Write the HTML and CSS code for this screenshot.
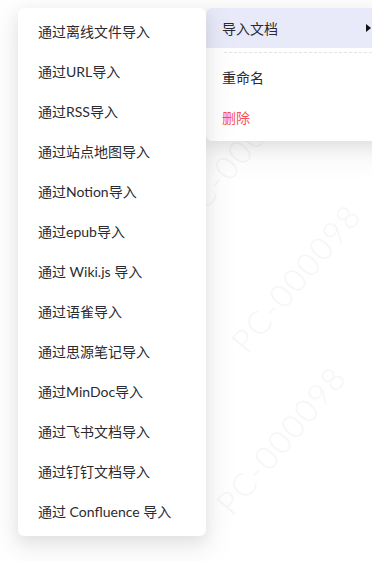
FILE: index.html
```html
<!DOCTYPE html>
<html lang="zh-CN">
<head>
    <meta charset="UTF-8">
    <meta name="viewport" content="width=device-width, initial-scale=1.0">
    <title>导入文档</title>
    <link rel="stylesheet" href="styles.css">
</head>
<body>
    <div class="watermarks">
        <span class="wm wm-1">PC-000098</span>
        <span class="wm wm-2">PC-000098</span>
        <span class="wm wm-3">PC-000098</span>
    </div>

    <div class="menus">
        <ul class="submenu">
            <li>通过离线文件导入</li>
            <li>通过URL导入</li>
            <li>通过RSS导入</li>
            <li>通过站点地图导入</li>
            <li>通过Notion导入</li>
            <li>通过epub导入</li>
            <li>通过 Wiki.js 导入</li>
            <li>通过语雀导入</li>
            <li>通过思源笔记导入</li>
            <li>通过MinDoc导入</li>
            <li>通过飞书文档导入</li>
            <li>通过钉钉文档导入</li>
            <li>通过 Confluence 导入</li>
        </ul>

        <ul class="context-menu">
            <li class="active">
                <span>导入文档</span>
                <span class="arrow"></span>
            </li>
            <li class="divider"></li>
            <li>重命名</li>
            <li class="danger">删除</li>
        </ul>
    </div>
</body>
</html>
```

FILE: styles.css
```css
html, body {
    margin: 0;
    height: 100%;
    overflow: hidden;
}
body {
    font-family: Lato, "Noto Sans CJK SC", sans-serif;
    font-size: 14px;
    color: #2a2b32;
    background-color: #fff;
    position: relative;
}
.watermarks {
    position: absolute;
    inset: 0;
    pointer-events: none;
}
.wm {
    position: absolute;
    font-family: Lato, sans-serif;
    font-size: 32px;
    font-weight: 300;
    letter-spacing: 2px;
    color: #f6f6f7;
    transform: rotate(-50deg);
    white-space: nowrap;
}
.wm-1 { left: 205px; top: 258px; }
.wm-2 { left: 190px; top: 420px; }
.wm-3 { left: 150px; top: 130px; }
.menus {
    position: relative;
    display: flex;
    align-items: flex-start;
    padding: 8px 0 0 18px;
}
ul {
    list-style: none;
    margin: 0;
    background-color: #fff;
    border-radius: 6px;
    box-shadow: 0 6px 16px rgba(0, 0, 0, 0.08), 0 9px 28px 8px rgba(0, 0, 0, 0.05);
    flex-shrink: 0;
    box-sizing: border-box;
}
.submenu {
    position: relative;
    z-index: 2;
    width: 188px;
    padding: 4px 0;
}
.submenu li {
    height: 40px;
    line-height: 40px;
    padding-left: 20px;
    white-space: nowrap;
}
.context-menu {
    width: 186px;
    padding: 0 0 4px;
}
.context-menu li {
    display: flex;
    align-items: center;
    justify-content: space-between;
    height: 40px;
    padding: 0 16px;
}
.context-menu .active {
    background-color: #e9eaf9;
    border-radius: 6px 0 0 0;
    padding-right: 21px;
}
.arrow {
    width: 0;
    height: 0;
    border-top: 4px solid transparent;
    border-bottom: 4px solid transparent;
    border-left: 5px solid #111;
}
.context-menu .divider {
    height: 0;
    margin: 4px 0 4px 18px;
    padding: 0;
    border-top: 1px dashed #e3e4ea;
}
.context-menu .danger {
    color: #f5505e;
}
```
